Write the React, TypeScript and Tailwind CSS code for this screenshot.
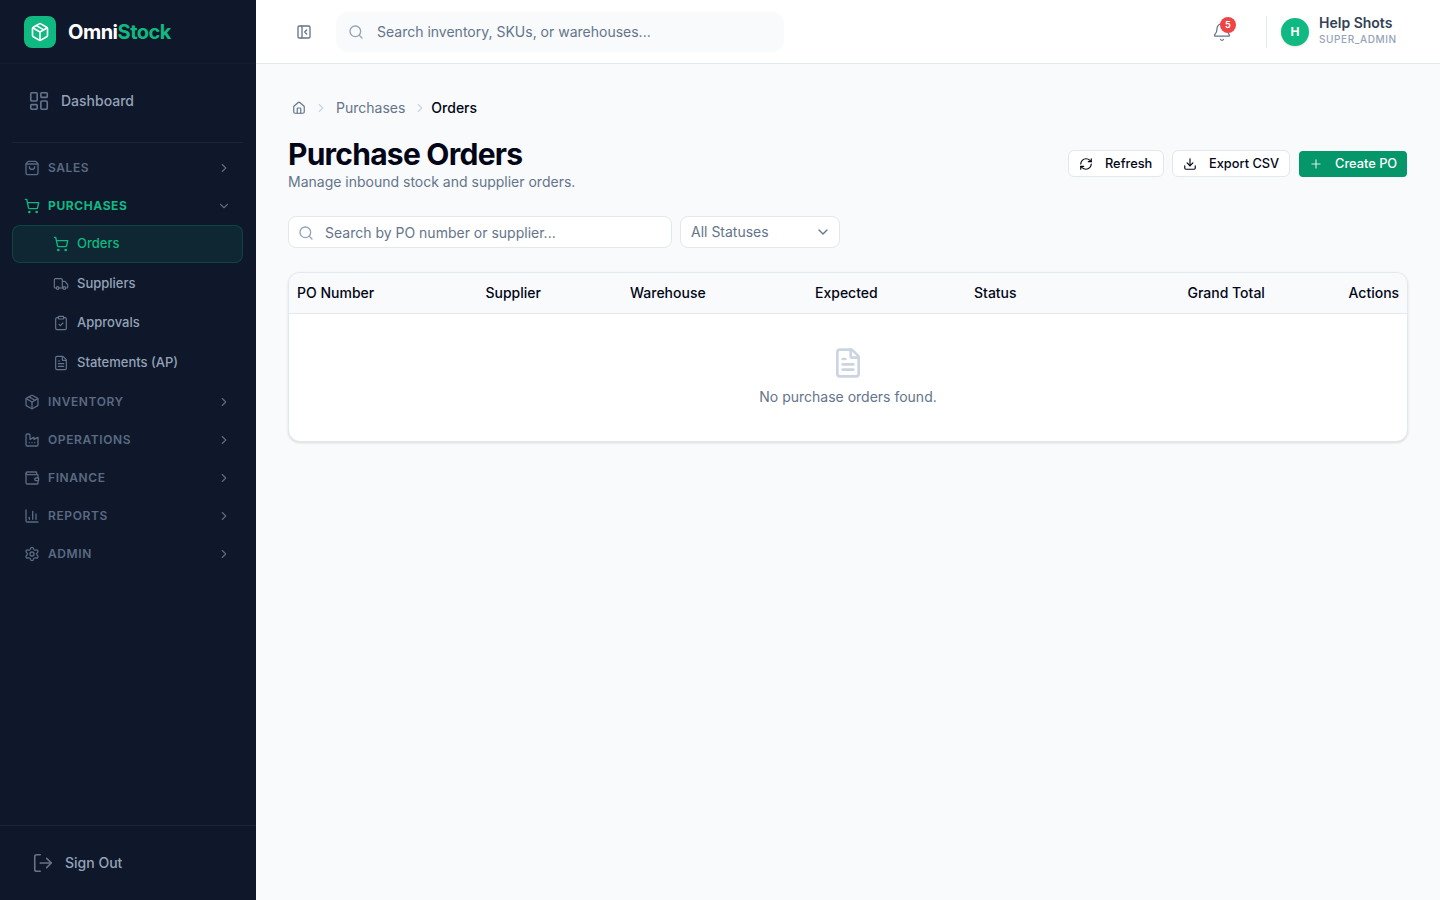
import React from "react";
import {
  Package, LayoutDashboard, ShoppingBag, ShoppingCart, Truck, ClipboardCheck, FileText, Factory, Wallet,
  BarChart3, Settings, LogOut, PanelLeftClose, Search, Bell, RefreshCw, Download, Plus, Home, ChevronRight, ChevronDown,
} from "lucide-react";

const Section = ({ icon: Icon, label, active = false }: { icon: any; label: string; active?: boolean }) => (
  <div className={`h-[38px] flex items-center pl-3 pr-[13px] ${active ? "text-[#10b981]" : "text-[#5a6a82]"}`}>
    <Icon size={16} strokeWidth={2} className="shrink-0" />
    <span className={`ml-2 flex-1 text-xs tracking-[0.6px] ${active ? "font-bold text-[#10b981]" : "font-semibold text-[#5a6a82]"}`}>{label}</span>
    {active ? <ChevronDown size={14} className="text-[#5a6a82]" /> : <ChevronRight size={14} className="text-[#5a6a82]" />}
  </div>
);

const Sub = ({ icon: Icon, label, active = false }: { icon: any; label: string; active?: boolean }) => (
  <div
    className={`h-[38px] flex items-center pl-10 mb-[1.5px] rounded-lg text-[13px] font-medium border ${
      active ? "bg-[#10b981]/10 border-[#10b981]/20 text-[#10b981]" : "border-transparent text-[#94a3b8]"
    }`}
  >
    <Icon size={16} strokeWidth={active ? 2 : 1.75} className={active ? "text-[#10b981]" : "text-[#64748b]"} />
    <span className="ml-2">{label}</span>
  </div>
);

const Btn = ({ icon: Icon, label, width }: { icon: any; label: string; width: string }) => (
  <button className={`h-[27px] ${width} flex items-center pl-[10px] bg-white border border-[#e2e8f0] rounded-md text-[12.8px] font-medium text-[#020617]`}>
    <Icon size={14} />
    <span className="ml-[12px]">{label}</span>
  </button>
);

export default function App() {
  return (
    <div className="flex h-[900px] w-[1440px] overflow-hidden bg-[#f8fafc] font-['Inter',sans-serif]">
      <aside className="w-64 shrink-0 bg-[#0f172a] flex flex-col">
        <div className="h-16 flex items-center pl-6 gap-3 border-b border-[#1e293b]/40">
          <div className="w-8 h-8 rounded-lg bg-[#10b981] flex items-center justify-center text-white">
            <Package size={20} />
          </div>
          <span className="text-xl font-bold tracking-[-0.5px] text-white">
            Omni<span className="text-[#10b981]">Stock</span>
          </span>
        </div>
        <div className="flex-1 flex flex-col px-3 pt-4">
          <div className="h-[42px] flex items-center pl-4 text-sm font-medium text-[#94a3b8]">
            <LayoutDashboard size={22} strokeWidth={1.75} className="text-[#64748b] mr-[11px]" />
            Dashboard
          </div>
          <div className="mt-5 mb-[6px] h-px bg-[#1e293b]/80 mr-[1px]" />
          <Section icon={ShoppingBag} label="SALES" />
          <Section icon={ShoppingCart} label="PURCHASES" active />
          <div className="mr-[1px]">
            <Sub icon={ShoppingCart} label="Orders" active />
            <Sub icon={Truck} label="Suppliers" />
            <Sub icon={ClipboardCheck} label="Approvals" />
            <Sub icon={FileText} label="Statements (AP)" />
          </div>
          <Section icon={Package} label="INVENTORY" />
          <Section icon={Factory} label="OPERATIONS" />
          <Section icon={Wallet} label="FINANCE" />
          <Section icon={BarChart3} label="REPORTS" />
          <Section icon={Settings} label="ADMIN" />
        </div>
        <div className="h-[75px] border-t border-[#1e293b]/80 flex items-center pl-8 text-sm font-medium text-[#94a3b8]">
          <LogOut size={22} strokeWidth={1.75} className="text-[#64748b] mr-[11px]" />
          Sign Out
        </div>
      </aside>

      <main className="flex-1 flex flex-col min-w-0">
        <header className="h-16 shrink-0 bg-white border-b border-[#e2e8f0] flex items-center pl-10 pr-11">
          <PanelLeftClose size={16} className="text-[#64748b]" />
          <div className="ml-6 w-[448px] h-10 rounded-xl bg-[#f8fafc] flex items-center pl-3 text-sm text-[#64748b]">
            <Search size={16} className="text-[#94a3b8]" />
            <span className="ml-[13px]">Search inventory, SKUs, or warehouses...</span>
          </div>
          <div className="flex-1" />
          <div className="relative mr-[34px]">
            <Bell size={20} strokeWidth={1.5} className="text-[#64748b]" />
            <span className="absolute -top-[5px] left-[8px] w-4 h-4 rounded-full bg-[#ef4444] text-white text-[9px] font-bold flex items-center justify-center">5</span>
          </div>
          <div className="w-px h-8 bg-[#e2e8f0] mr-[14px]" />
          <div className="w-7 h-7 rounded-full bg-[#10b981] text-white text-xs font-bold flex items-center justify-center shadow-sm mr-[10px]">H</div>
          <div className="flex flex-col w-[77px] -mt-[2px]">
            <span className="text-sm leading-[18px] font-semibold text-[#334155]">Help Shots</span>
            <span className="text-[10px] leading-[15px] font-medium text-[#94a3b8] tracking-[0.6px] whitespace-nowrap">SUPER_ADMIN</span>
          </div>
        </header>

        <div className="flex-1 px-8 pt-8">
          <nav className="h-5 flex items-center text-sm text-[#64748b] mt-[2px] ml-[4px]">
            <Home size={14} />
            <ChevronRight size={14} className="text-[#cbd5e1] ml-[8px] mr-[8px]" />
            <span>Purchases</span>
            <ChevronRight size={14} className="text-[#cbd5e1] ml-[8px] mr-[4px]" />
            <span className="text-[#020617] font-medium">Orders</span>
          </nav>
          <div className="flex items-center justify-between mt-[21px]">
            <div>
              <h1 className="text-3xl leading-[30px] font-bold tracking-[-0.75px] text-[#020617]">Purchase Orders</h1>
              <p className="text-sm leading-5 text-[#64748b] mt-[3px]">Manage inbound stock and supplier orders.</p>
            </div>
            <div className="flex items-center mr-[1px] mt-[-4px]">
              <Btn icon={RefreshCw} label="Refresh" width="w-[96px]" />
              <div className="w-2" />
              <Btn icon={Download} label="Export CSV" width="w-[118px]" />
              <div className="w-[9px]" />
              <button className="h-[26px] w-[108px] flex items-center pl-[10px] bg-[#059669] rounded-[4px] text-[12.8px] font-medium text-white">
                <Plus size={14} className="text-white/80" />
                <span className="ml-[12px]">Create PO</span>
              </button>
            </div>
          </div>
          <div className="flex items-center gap-2 mt-[24px]">
            <div className="w-[384px] h-8 bg-white border border-[#e2e8f0] rounded-lg flex items-center pl-[9px] pt-[1px] text-sm text-[#64748b]">
              <Search size={16} className="text-[#94a3b8]" />
              <span className="ml-[11px]">Search by PO number or supplier...</span>
            </div>
            <div className="w-40 h-8 bg-white border border-[#e2e8f0] rounded-lg flex items-center justify-between pl-[10px] pr-2 text-sm text-[#64748b]">
              <span>All Statuses</span>
              <ChevronDown size={16} />
            </div>
          </div>
          <div className="mt-6 w-[1120px] h-[170px] bg-white border border-[#e2e8f0] rounded-xl shadow-sm overflow-hidden">
            <div className="h-[41px] bg-[#f8fafc] border-b border-[#e2e8f0] relative text-sm font-medium text-[#020617] flex items-center">
              <span className="ml-2 w-[188.5px]">PO Number</span>
              <span className="w-[144.5px]">Supplier</span>
              <span className="w-[185px]">Warehouse</span>
              <span className="w-[159px]">Expected</span>
              <span className="w-[213.5px]">Status</span>
              <span className="w-[161px]">Grand Total</span>
              <span>Actions</span>
            </div>
            <div className="flex flex-col items-center pt-[33px]">
              <FileText size={32} strokeWidth={2} className="text-[#cbd5e1]" />
              <p className="mt-[8px] text-sm text-[#64748b]">No purchase orders found.</p>
            </div>
          </div>
        </div>
      </main>
    </div>
  );
}
